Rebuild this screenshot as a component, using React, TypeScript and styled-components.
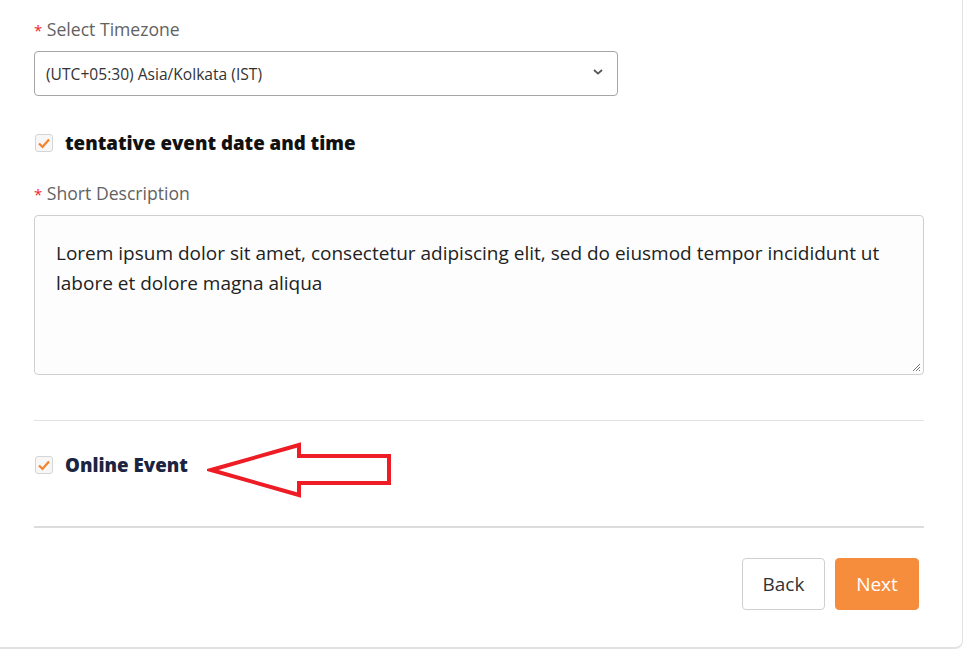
import React from "react"
import styled, { createGlobalStyle } from "styled-components"

const GlobalStyle = createGlobalStyle`
  html, body {
    margin: 0;
    padding: 0;
    background: #ffffff;
    font-family: "Open Sans", "Noto Sans", sans-serif;
  }
`

export default function App () {
  return (
    <>
      <GlobalStyle />
      <Card>
        <Field>
          <Label><Req>*</Req> Select Timezone</Label>
          <SelectBox>
            <span>(UTC+05:30) Asia/Kolkata (IST)</span>
            <Chevron viewBox="0 0 10 6">
              <path d="M1 1 L5 4.6 L9 1" fill="none" stroke="#555" strokeWidth="1.8" />
            </Chevron>
          </SelectBox>
        </Field>

        <CheckRow top={35}>
          <CheckBox />
          <CheckLabel>tentative event date and time</CheckLabel>
        </CheckRow>

        <Field top={26}>
          <Label><Req>*</Req> Short Description</Label>
          <TextArea>
            Lorem ipsum dolor sit amet, consectetur adipiscing elit, sed do eiusmod tempor incididunt ut labore et dolore magna aliqua
            <Grip viewBox="0 0 10 10">
              <path d="M9 2 L2 9 M9 5 L5 9 M9 8 L8 9" stroke="#777" strokeWidth="1" />
            </Grip>
          </TextArea>
        </Field>

        <Divider top={45} />

        <CheckRow top={32}>
          <CheckBox />
          <CheckLabel dark>Online Event</CheckLabel>
        </CheckRow>

        <Divider top={49} thick />

        <Actions>
          <Button>Back</Button>
          <Button primary>Next</Button>
        </Actions>

        {/* annotation arrow drawn over the form */}
        <Arrow viewBox="0 0 186 60">
          <polygon
            points="4,30 92,5 92,16 182,16 182,43 92,43 92,55"
            fill="none"
            stroke="#ee1c25"
            strokeWidth="4"
          />
        </Arrow>
      </Card>
    </>
  )
}

function CheckBox () {
  return (
    <Box>
      <svg width="14" height="12" viewBox="0 0 14 12">
        <path d="M2 6.5 L5.5 10 L12 2.5" fill="none" stroke="#f5822a" strokeWidth="2.2" />
      </svg>
    </Box>
  )
}

const Card = styled.div`
  position: relative;
  box-sizing: border-box;
  width: 963px;
  height: 649px;
  padding: 17px 38px 0 34px;
  background: #fff;
  border-right: 1px solid #e2e2e2;
  border-bottom: 2px solid #e2e2e2;
  border-bottom-right-radius: 8px;
  display: flex;
  flex-direction: column;
`

const Field = styled.div<{ top?: number }>`
  display: flex;
  flex-direction: column;
  gap: 9px;
  margin-top: ${p => p.top ?? 0}px;
`

const Label = styled.div`
  font-size: 17.6px;
  line-height: 24px;
  color: #626262;
`

const Req = styled.span`
  color: #f5222d;
  font-size: 15px;
`

const SelectBox = styled.div`
  box-sizing: border-box;
  width: 584px;
  height: 45px;
  border: 1px solid #a6a6a6;
  border-radius: 4px;
  padding: 0 14px 0 11px;
  display: flex;
  align-items: center;
  justify-content: space-between;
  font-size: 15.6px;
  color: #333;
`

const Chevron = styled.svg`
  width: 10px;
  height: 6px;
  margin-bottom: 4px;
`

const CheckRow = styled.div<{ top?: number }>`
  display: flex;
  align-items: center;
  gap: 12px;
  margin-top: ${p => p.top ?? 0}px;
  padding-left: 1px;
`

const Box = styled.div`
  box-sizing: border-box;
  width: 18px;
  height: 18px;
  border: 1px solid #d5d5d5;
  border-radius: 3px;
  background: #f7f7f7;
  display: flex;
  align-items: center;
  justify-content: center;
`

const CheckLabel = styled.div<{ dark?: boolean }>`
  font-size: 18.7px;
  font-weight: 800;
  color: ${p => (p.dark ? "#1b2440" : "#111")};
  line-height: 24px;
`

const TextArea = styled.div`
  position: relative;
  box-sizing: border-box;
  height: 160px;
  border: 1px solid #cfcfcf;
  border-radius: 4px;
  background: #fdfdfd;
  padding: 22px 21px;
  font-size: 19px;
  line-height: 30px;
  color: #222;
`

const Grip = styled.svg`
  position: absolute;
  right: 2px;
  bottom: 2px;
  width: 10px;
  height: 10px;
`

const Divider = styled.div<{ top: number; thick?: boolean }>`
  height: ${p => (p.thick ? 2 : 1)}px;
  background: ${p => (p.thick ? "#dcdcdc" : "#e2e2e2")};
  margin-top: ${p => p.top}px;
`

const Arrow = styled.svg`
  position: absolute;
  left: 207px;
  top: 440px;
  width: 186px;
  height: 60px;
`

const Actions = styled.div`
  display: flex;
  justify-content: flex-end;
  gap: 10px;
  margin-top: 30px;
  padding-right: 5px;
`

const Button = styled.button<{ primary?: boolean }>`
  box-sizing: border-box;
  height: 52px;
  width: ${p => (p.primary ? 84 : 83)}px;
  border-radius: 4px;
  border: 1px solid ${p => (p.primary ? "#f68d3c" : "#cfcfcf")};
  background: ${p => (p.primary ? "#f68d3c" : "#fff")};
  color: ${p => (p.primary ? "#fff" : "#333")};
  font-family: "Open Sans", "Noto Sans", sans-serif;
  font-size: 19px;
  cursor: pointer;
`
